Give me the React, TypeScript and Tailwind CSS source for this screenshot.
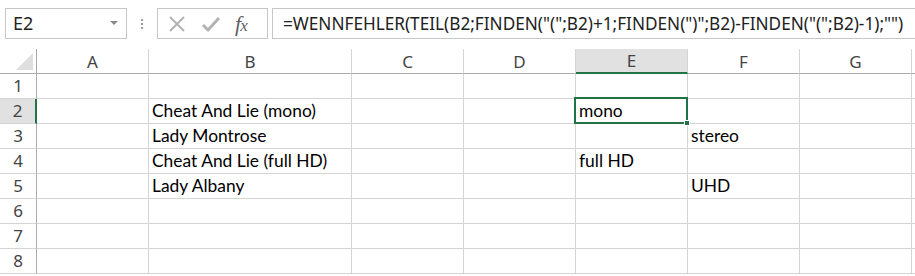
import React from 'react';

const cols = ['A', 'B', 'C', 'D', 'E', 'F', 'G', 'H'];
const colW = ['w-[112px]', 'w-[203px]', 'w-[112px]', 'w-[112px]', 'w-[112px]', 'w-[112px]', 'w-[112px]', 'w-[112px]'];

const data: Record<string, string> = {
  'B2': 'Cheat And Lie (mono)',
  'E2': 'mono',
  'B3': 'Lady Montrose',
  'F3': 'stereo',
  'B4': 'Cheat And Lie (full HD)',
  'E4': 'full HD',
  'B5': 'Lady Albany',
  'F5': 'UHD',
};

const FormulaBar: React.FC = () => (
  <div className="flex items-start h-[49px] pt-[8px] pl-[5px] shrink-0">
    {/* name box */}
    <div className="relative w-[122px] h-[31px] border border-[#c6c6c6] bg-white flex items-center pl-[7px] text-[18px] text-[#222] font-['Noto_Sans',sans-serif]">
      E2
      <span className="absolute right-[8px] top-[12px] w-0 h-0 border-l-[4px] border-r-[4px] border-t-[4px] border-l-transparent border-r-transparent border-t-[#8a8a8a]" />
    </div>
    {/* grip dots */}
    <div className="w-[30px] h-[31px] flex flex-col items-center justify-center gap-[2px]">
      <span className="w-[2px] h-[2px] bg-[#9a9a9a]" />
      <span className="w-[2px] h-[2px] bg-[#9a9a9a]" />
      <span className="w-[2px] h-[2px] bg-[#9a9a9a]" />
    </div>
    {/* cancel / enter / fx */}
    <div className="w-[111px] h-[31px] border border-[#c6c6c6] bg-white flex items-center">
      <svg width="18" height="18" viewBox="0 0 18 18" className="ml-[10px]">
        <path d="M2 2 L16 16 M16 2 L2 16" stroke="#b3b3b3" strokeWidth="2" fill="none" />
      </svg>
      <svg width="20" height="18" viewBox="0 0 20 18" className="ml-[15px]">
        <path d="M2 10 L7 15 L18 3" stroke="#b3b3b3" strokeWidth="3" fill="none" strokeLinejoin="round" />
      </svg>
      <span className="ml-[14px] text-[22px] leading-none italic text-[#5f5f5f] font-['Liberation_Serif',serif] tracking-[-1px]">
        f<span className="text-[17px]">x</span>
      </span>
    </div>
    {/* formula input */}
    <div className="ml-[4px] flex-1 min-w-0 h-[31px] border border-r-0 border-[#c6c6c6] bg-white flex items-center pl-[10px] text-[17.2px] text-[#222] font-['Noto_Sans',sans-serif] whitespace-nowrap">
      =WENNFEHLER(TEIL(B2;FINDEN("(";B2)+1;FINDEN(")";B2)-FINDEN("(";B2)-1);"")
    </div>
  </div>
);

const HeaderRow: React.FC = () => (
  <div className="flex h-[25px] font-['Noto_Sans',sans-serif] text-[17px] text-[#444]">
    <div className="relative w-[37px] shrink-0 border-r border-b border-[#ababab] bg-white">
      <svg className="absolute right-[3px] bottom-[3px]" width="17" height="17" viewBox="0 0 17 17">
        <polygon points="17,0 17,17 0,17" fill="#dedede" />
      </svg>
    </div>
    {cols.map((c, i) => (
      <div
        key={c}
        className={`${colW[i]} shrink-0 flex items-center justify-center leading-none ${
          c === 'E'
            ? 'bg-[#e1e1e1] border-r border-r-[#d4d4d4] border-b-2 border-b-[#217346]'
            : 'bg-white border-r border-r-[#d4d4d4] border-b border-b-[#ababab]'
        }`}
      >
        {c === 'H' ? '' : c}
      </div>
    ))}
  </div>
);

const Row: React.FC<{ n: number }> = ({ n }) => (
  <div className="flex h-[25px]">
    <div
      className={`w-[37px] shrink-0 flex items-center justify-center font-['Noto_Sans',sans-serif] text-[17px] text-[#444] border-b border-b-[#d4d4d4] ${
        n === 2 ? 'bg-[#e1e1e1] border-r-2 border-r-[#217346]' : 'bg-white border-r border-r-[#ababab]'
      }`}
    >
      {n}
    </div>
    {cols.map((c, i) => {
      const id = `${c}${n}`;
      const sel = id === 'E2';
      return (
        <div
          key={id}
          className={`${colW[i]} shrink-0 relative border-r border-b border-[#d4d4d4] bg-white flex items-end pl-[3px] pb-[2px] text-[17.4px] leading-[20px] text-black font-['Lato',sans-serif] whitespace-nowrap ${sel ? 'z-10' : ''}`}
        >
          {data[id] && <span>{data[id]}</span>}
          {sel && (
            <>
              <span className="absolute -left-[2px] -top-[2px] -right-px -bottom-px border-2 border-[#217346] pointer-events-none" />
              <span className="absolute -right-[3px] -bottom-[3px] w-[6px] h-[6px] bg-[#217346] border border-white" />
            </>
          )}
        </div>
      );
    })}
  </div>
);

export default function App() {
  return (
    <div className="w-[915px] h-[276px] bg-white overflow-hidden flex flex-col">
      <FormulaBar />
      <div className="flex flex-col">
        <HeaderRow />
        {[1, 2, 3, 4, 5, 6, 7, 8].map((n) => (
          <Row key={n} n={n} />
        ))}
      </div>
    </div>
  );
}
